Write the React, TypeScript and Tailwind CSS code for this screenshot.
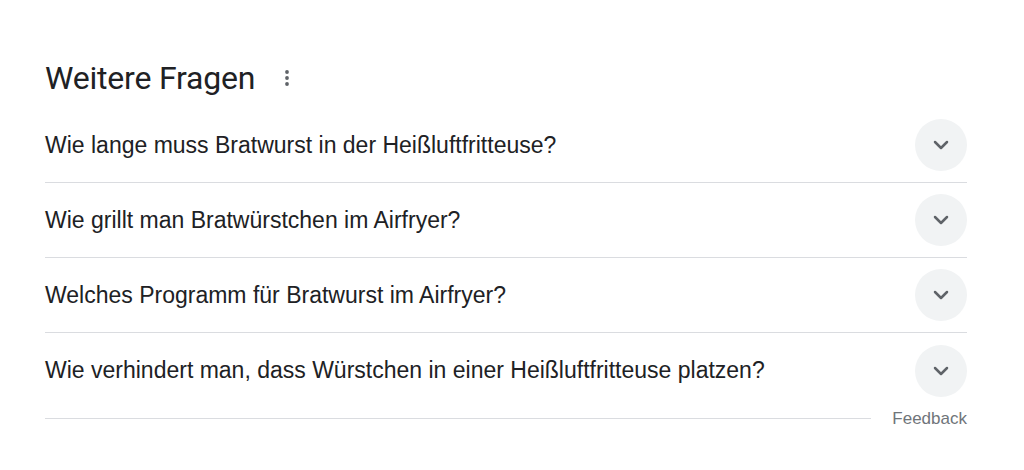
import { ChevronDown } from "lucide-react";

const questions = [
  "Wie lange muss Bratwurst in der Heißluftfritteuse?",
  "Wie grillt man Bratwürstchen im Airfryer?",
  "Welches Programm für Bratwurst im Airfryer?",
  "Wie verhindert man, dass Würstchen in einer Heißluftfritteuse platzen?",
];

function MoreIcon() {
  return (
    <svg width="16" height="20" viewBox="0 0 16 20" fill="#5f6368">
      <circle cx="8" cy="4" r="1.9" />
      <circle cx="8" cy="10" r="1.9" />
      <circle cx="8" cy="16" r="1.9" />
    </svg>
  );
}

export default function App() {
  return (
    <div className="w-[1024px] h-[470px] bg-white pl-[45px] pt-[58px] text-[#202124]">
      <div className="w-[922px]">
        {/* header */}
        <div className="flex items-center h-[40px] gap-[24px]">
          <h2 className="text-[32px] font-['Roboto',sans-serif] tracking-[-0.2px]">Weitere Fragen</h2>
          <MoreIcon />
        </div>

        {/* questions */}
        <div className="mt-[10px]">
          {questions.map((q, i) => (
            <div
              key={i}
              className={
                "flex items-center justify-between h-[75px] " +
                (i < questions.length - 1 ? "border-b border-[#dadce0]" : "")
              }
            >
              <span className="text-[23px] font-['Liberation_Sans',Arial,sans-serif]">{q}</span>
              <div className="w-[52px] h-[52px] rounded-full bg-[#f1f3f4] flex items-center justify-center">
                <ChevronDown size={24} strokeWidth={2.5} color="#5f6368" />
              </div>
            </div>
          ))}
        </div>

        {/* feedback */}
        <div className="flex items-center mt-[-2px]">
          <div className="flex-1 border-t border-[#dadce0] mr-[21px]" />
          <span className="text-[17px] text-[#70757a] font-['Liberation_Sans',Arial,sans-serif]">Feedback</span>
        </div>
      </div>
    </div>
  );
}
